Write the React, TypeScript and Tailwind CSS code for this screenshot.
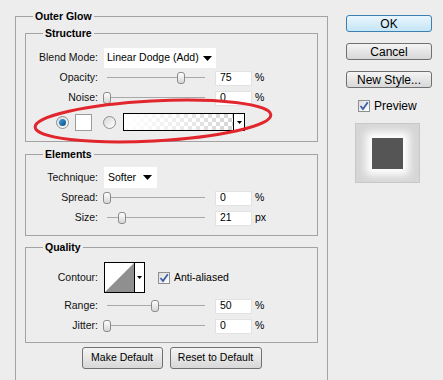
import React from 'react';

const font = "font-['Liberation_Sans',Arial,sans-serif]";

const Group = ({ title, className = '', legendClass = '', children }: { title: string; className?: string; legendClass?: string; children: React.ReactNode }) => (
  <fieldset className={`border border-[#a3a3a3] ${className}`}>
    <legend className={`px-[2px] text-[10.5px] font-bold leading-[13px] text-black ${legendClass}`}>{title}</legend>
    {children}
  </fieldset>
);

const Label = ({ children }: { children: React.ReactNode }) => (
  <div className="w-[72px] shrink-0 text-right text-[10.5px] text-[#111]">{children}</div>
);

// thumb = x position of the thumb centre on the page
const Slider = ({ thumb }: { thumb: number }) => (
  <div className="relative ml-[5px] h-[20px] w-[106px] shrink-0">
    <div className="absolute left-[4px] right-[4px] top-[9px] h-[2px] border-t border-[#a9a9a9] border-b-white" />
    <div
      className="absolute top-[4px] h-[12px] w-[8px] rounded-[3px] border border-[#8b8b8b] bg-gradient-to-b from-white to-[#d6d6d6]"
      style={{ left: thumb - 103 - 4 }}
    />
  </div>
);

const Num = ({ value, unit }: { value: string; unit: string }) => (
  <>
    <div className="ml-[6px] flex h-[15px] w-[37px] shrink-0 items-center border border-[#e2e2e2] bg-white pl-[4px] text-[10.5px] text-black">
      {value}
    </div>
    <div className="ml-[3px] text-[10.5px] text-black">{unit}</div>
  </>
);

const SliderRow = ({ label, thumb, value, unit }: { label: string; thumb: number; value: string; unit: string }) => (
  <div className="flex h-[20px] items-center">
    <Label>{label}</Label>
    <Slider thumb={thumb} />
    <Num value={value} unit={unit} />
  </div>
);

const Arrow = () => (
  <svg width="9" height="5" viewBox="0 0 9 5">
    <path d="M0 0 H9 L4.5 5 Z" fill="#000" />
  </svg>
);

const SmallArrow = () => (
  <svg width="5" height="3" viewBox="0 0 5 3">
    <path d="M0 0 H5 L2.5 3 Z" fill="#000" />
  </svg>
);

const Check = () => (
  <div className="flex h-[12px] w-[12px] shrink-0 items-center justify-center border border-[#8e8f8f] bg-gradient-to-br from-[#dcdcdc] to-white">
    <svg width="10" height="10" viewBox="0 0 10 10">
      <path d="M1.5 5 L4 8 L8.8 1.2" stroke="#3d5ea8" strokeWidth="1.8" fill="none" />
    </svg>
  </div>
);

const Radio = ({ on }: { on?: boolean }) => (
  <div className="flex h-[13px] w-[13px] shrink-0 items-center justify-center rounded-full border border-[#8e8f8f] bg-gradient-to-br from-[#d8d8d8] to-white">
    {on && <div className="h-[7px] w-[7px] rounded-full bg-gradient-to-br from-[#3fa3e0] to-[#0d4c84]" />}
  </div>
);

const GrayBtn = ({ children, className = '' }: { children: React.ReactNode; className?: string }) => (
  <div className={`flex items-center justify-center rounded-[3px] border border-[#707070] bg-gradient-to-b from-[#f4f4f4] to-[#d8d8d8] text-black ${className}`}>
    {children}
  </div>
);

export default function App() {
  return (
    <div className={`relative flex h-[380px] w-[443px] overflow-hidden bg-[#ededed] ${font}`}>
      {/* left panel */}
      <div className="ml-[15px] mt-[10px]">
        <Group title="Outer Glow" className="w-[313px] px-[9px] pb-[40px]" legendClass="ml-[8px]">
          <Group title="Structure" className="mt-[4px] pb-[10px]" legendClass="ml-[17px]">
            <div className="mt-[8px] flex h-[20px] items-center">
              <Label>Blend Mode:</Label>
              <div className="ml-[6px] flex h-[20px] w-[112px] items-center justify-between bg-white pl-[3px] pr-[4px] text-[10.5px] text-black">
                <span>Linear Dodge (Add)</span>
                <Arrow />
              </div>
            </div>
            <SliderRow label="Opacity:" thumb={181} value="75" unit="%" />
            <SliderRow label="Noise:" thumb={107} value="0" unit="%" />
            <div className="mt-[5px] flex h-[18px] items-center">
              <div className="ml-[30px]">
                <Radio on />
              </div>
              <div className="ml-[6px] h-[17px] w-[17px] border border-[#9c9c9c] bg-white" />
              <div className="ml-[11px]">
                <Radio />
              </div>
              <div className="ml-[7px] flex h-[18px] w-[122px] border border-black">
                <div className="relative flex-1 overflow-hidden bg-[linear-gradient(45deg,#d4d4d4_25%,transparent_25%,transparent_75%,#d4d4d4_75%),linear-gradient(45deg,#d4d4d4_25%,transparent_25%,transparent_75%,#d4d4d4_75%)] bg-[length:8px_8px] bg-[position:0_0,4px_4px] bg-white">
                  <div className="absolute inset-0 bg-gradient-to-r from-white via-white/60 to-transparent" />
                </div>
                <div className="flex w-[11px] items-center justify-center border-l border-black bg-white">
                  <SmallArrow />
                </div>
              </div>
            </div>
          </Group>

          <Group title="Elements" className="mt-[6px] pb-[7px]" legendClass="ml-[17px]">
            <div className="mt-[6px] flex h-[21px] items-center">
              <Label>Technique:</Label>
              <div className="ml-[6px] flex h-[21px] w-[53px] items-center justify-between bg-white pl-[4px] pr-[5px] text-[10.5px] text-black">
                <span>Softer</span>
                <Arrow />
              </div>
            </div>
            <SliderRow label="Spread:" thumb={107} value="0" unit="%" />
            <SliderRow label="Size:" thumb={122} value="21" unit="px" />
          </Group>

          <Group title="Quality" className="mt-[5px] pb-[6px]" legendClass="ml-[17px]">
            <div className="mt-[8px] flex h-[31px] items-center">
              <Label>Contour:</Label>
              <div className="ml-[6px] flex h-[31px] w-[41px] border border-black bg-white">
                <svg width="29" height="29" viewBox="0 0 29 29" className="block">
                  <polygon points="0,29 29,0 29,29" fill="#8f8f8f" />
                </svg>
                <div className="flex flex-1 items-center justify-center border-l border-black">
                  <SmallArrow />
                </div>
              </div>
              <div className="ml-[13px]">
                <Check />
              </div>
              <div className="ml-[4px] text-[10.5px] text-black">Anti-aliased</div>
            </div>
            <div className="mt-[3px]">
              <SliderRow label="Range:" thumb={155} value="50" unit="%" />
            </div>
            <SliderRow label="Jitter:" thumb={107} value="0" unit="%" />
          </Group>

          <div className="mt-[4px] flex justify-center gap-[7px] text-[10.5px]">
            <GrayBtn className="h-[22px] w-[81px]">Make Default</GrayBtn>
            <GrayBtn className="h-[22px] w-[92px]">Reset to Default</GrayBtn>
          </div>
        </Group>
      </div>

      {/* right panel */}
      <div className="ml-[18px] mt-[15px] flex w-[86px] flex-col text-[12px]">
        <div className="flex h-[17px] items-center justify-center rounded-[3px] border border-[#3c7fb1] bg-gradient-to-b from-[#eaf6fd] to-[#c4e5f6] text-black">
          OK
        </div>
        <GrayBtn className="mt-[11px] h-[17px]">Cancel</GrayBtn>
        <GrayBtn className="mt-[11px] h-[17px]">New Style...</GrayBtn>
        <div className="mt-[9px] flex items-center pl-[12px]">
          <Check />
          <span className="ml-[4px] text-black">Preview</span>
        </div>
        <div className="ml-[9px] mt-[8px] flex h-[60px] w-[65px] items-center justify-center border border-[#c8c8c8] bg-[#d6d6d6]">
          <div className="h-[31px] w-[31px] bg-[#555555] shadow-[0_0_8px_6px_#ffffff]" />
        </div>
      </div>

      {/* red marker ellipse drawn over the dialog */}
      <svg className="pointer-events-none absolute left-[30px] top-[95px]" width="250" height="54" viewBox="0 0 250 54">
        <ellipse cx="123" cy="26" rx="118" ry="20" transform="rotate(-3 123 26)" fill="none" stroke="#e2262d" strokeWidth="3" />
      </svg>
    </div>
  );
}
